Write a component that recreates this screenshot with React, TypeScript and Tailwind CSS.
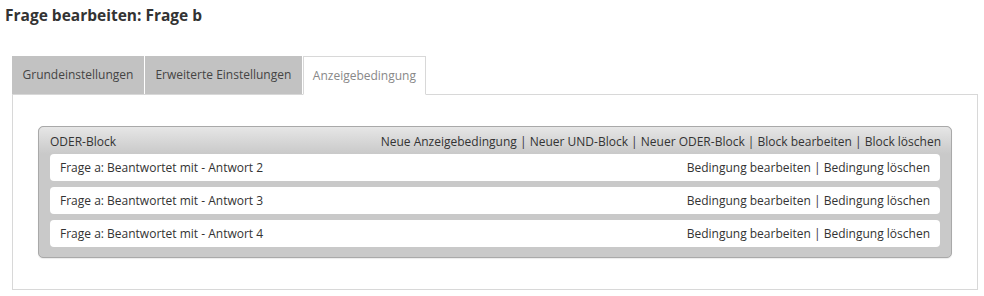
const rows = ["Antwort 2", "Antwort 3", "Antwort 4"];

const tabs = [
  { label: "Grundeinstellungen", active: false },
  { label: "Erweiterte Einstellungen", active: false },
  { label: "Anzeigebedingung", active: true },
];

const App = () => {
  return (
    <div className="min-h-[296px] bg-white font-['Open_Sans',sans-serif] text-[#333]">
      {/* Page title */}
      <h1 className="pl-[5px] pt-[4px] text-[15.5px] font-bold leading-[22px] text-[#333]">
        Frage bearbeiten: Frage b
      </h1>

      <div className="mx-[12px] mt-[30px] w-[966px]">
        {/* Tabs */}
        <div className="relative z-10 -mb-px flex gap-px">
          {tabs.map((tab) =>
            tab.active ? (
              <div
                key={tab.label}
                className="flex h-[39px] items-center border border-b-white border-[#d8d8d8] bg-white px-[9px] text-[12px] text-[#888]"
              >
                {tab.label}
              </div>
            ) : (
              <div
                key={tab.label}
                className="flex h-[38px] items-center bg-[#c2c2c2] px-[10.5px] text-[12px] text-[#444]"
              >
                {tab.label}
              </div>
            )
          )}
        </div>

        {/* Panel */}
        <div className="h-[196px] border border-[#d8d8d8] px-[25px] pt-[31px]">
          <div className="rounded-[5px] border border-[#a9a9a9] bg-[#c9c9c9] pb-[10px] shadow-[0_1px_1px_rgba(0,0,0,0.08)]">
            <div className="flex h-[27px] items-center justify-between rounded-t-[5px] bg-gradient-to-b from-[#e6e6e6] to-[#c9c9c9] pl-[11px] pr-[10px] pt-[2px] text-[12px] text-[#333]">
              <span>ODER-Block</span>
              <span>
                Neue Anzeigebedingung | Neuer UND-Block | Neuer ODER-Block | Block bearbeiten | Block löschen
              </span>
            </div>
            <div className="flex flex-col gap-[6px] px-[11px]">
              {rows.map((r) => (
                <div
                  key={r}
                  className="flex h-[27px] items-center justify-between rounded-[4px] bg-white pl-[10px] pr-[10px] text-[12px] text-[#333]"
                >
                  <span>Frage a: Beantwortet mit - {r}</span>
                  <span>Bedingung bearbeiten | Bedingung löschen</span>
                </div>
              ))}
            </div>
          </div>
        </div>
      </div>
    </div>
  );
};

export default App;
